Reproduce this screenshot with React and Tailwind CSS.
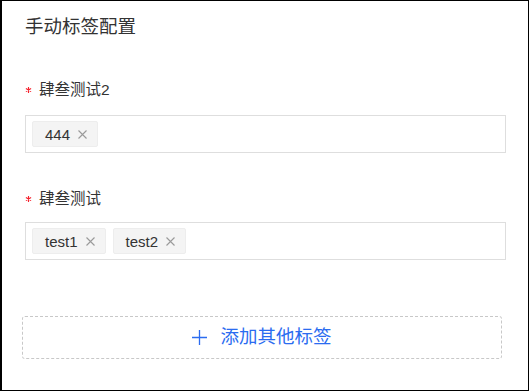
import React from 'react'

const FONT = { fontFamily: '"Liberation Sans", "Noto Sans CJK SC", sans-serif' }

// SMALL CLOSE ICON ON A TAG
const CloseIcon = () => (
    <svg width="9" height="9" viewBox="0 0 9 9" className="shrink-0">
        <path d="M0.5 0.5 L8.5 8.5 M8.5 0.5 L0.5 8.5" stroke="#9a9a9a" strokeWidth="1.1" fill="none" />
    </svg>
)

const Tag = ({ text }) => (
    <div className="flex h-[26px] items-center gap-[8px] rounded-[2px] border border-[#ededed] bg-[#f4f4f4] pl-[12px] pr-[10px]">
        <span className="text-[15px] leading-none text-[#333]">{text}</span>
        <CloseIcon />
    </div>
)

// RED REQUIRED MARK
const Required = () => (
    <svg width="14" height="22" viewBox="0 0 14 22" className="shrink-0">
        <path d="M3.5 8 V14 M0.9 9.5 L6.1 12.5 M6.1 9.5 L0.9 12.5" stroke="#f5222d" strokeWidth="1.1" fill="none" />
    </svg>
)

const Field = ({ label, tags, className, gap }) => (
    <div className={className}>
        <div className="flex h-[22px] items-center">
            <Required />
            <span className="text-[15.5px] leading-[22px] text-[#333]">{label}</span>
        </div>
        <div className={`${gap} flex h-[38px] w-[481px] items-center gap-[7px] border border-[#dedede] px-[6px]`}>
            {tags.map((t) => (
                <Tag key={t} text={t} />
            ))}
        </div>
    </div>
)

export default function App() {
    return (
        <div style={FONT} className="h-[391px] w-[529px] border border-l-2 border-black bg-white pl-[23px] pt-[14px]">

            {/* TITLE */}
            <div className="text-[18.5px] leading-[24px] text-[#333]">手动标签配置</div>

            {/* FIELDS */}
            <Field className="mt-[40px]" gap="mt-[14px]" label="肆叁测试2" tags={['444']} />
            <Field className="mt-[35px]" gap="mt-[12px]" label="肆叁测试" tags={['test1', 'test2']} />

            {/* ADD BUTTON */}
            <div className="ml-[-3px] mt-[56px] flex h-[43px] w-[480px] items-center justify-center gap-[13px] rounded-[3px] border border-dashed border-[#c8c8c8] text-[#2b6cf0]">
                <svg width="15" height="15" viewBox="0 0 15 15">
                    <path d="M7.5 0 V15 M0 7.5 H15" stroke="#2b6cf0" strokeWidth="1.3" fill="none" />
                </svg>
                <span className="text-[18.5px] leading-none">添加其他标签</span>
            </div>
        </div>
    )
}
